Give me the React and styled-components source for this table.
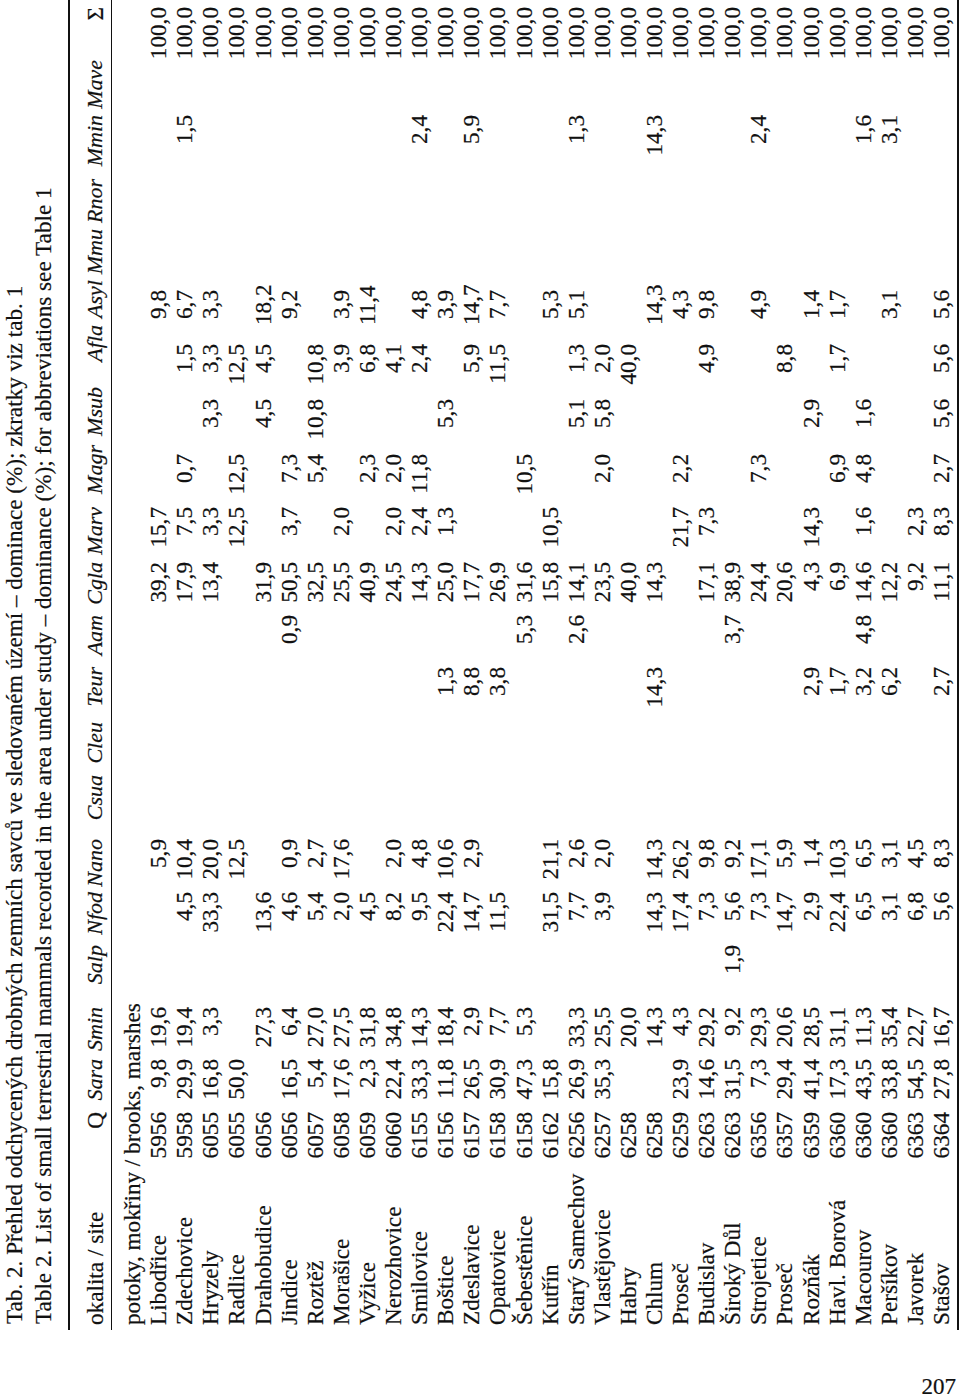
import React from 'react'
import styled, { createGlobalStyle } from 'styled-components'

const GlobalStyle = createGlobalStyle`
    html, body {
        margin: 0;
        padding: 0;
        background: #fff;
    }
    body {
        font-family: "Liberation Serif", "Times New Roman", serif;
        color: #111;
    }
`

// right = right edge of the header label, inset = how far the numbers sit left of it
const COLUMNS = [
    { label: 'Q', right: 218, inset: 0, italic: false },
    { label: 'Sara', right: 271, inset: 0, italic: true },
    { label: 'Smin', right: 323, inset: 0, italic: true },
    { label: 'Salp', right: 385, inset: 0, italic: true },
    { label: 'Nfod', right: 438, inset: 0, italic: true },
    { label: 'Nano', right: 491, inset: 0, italic: true },
    { label: 'Csua', right: 555, inset: 0, italic: true },
    { label: 'Cleu', right: 608, inset: 0, italic: true },
    { label: 'Teur', right: 663, inset: 0, italic: true },
    { label: 'Aam', right: 715, inset: 0, italic: true },
    { label: 'Cgla', right: 768, inset: 0, italic: true },
    { label: 'Marv', right: 823, inset: 0, italic: true },
    { label: 'Magr', right: 885, inset: 9, italic: true },
    { label: 'Msub', right: 943, inset: 12, italic: true },
    { label: 'Afla', right: 1005, inset: 19, italic: true },
    { label: 'Asyl', right: 1050, inset: 10, italic: true },
    { label: 'Mmu', right: 1101, inset: 0, italic: true },
    { label: 'Rnor', right: 1151, inset: 0, italic: true },
    { label: 'Mmin', right: 1215, inset: 0, italic: true },
    { label: 'Mave', right: 1270, inset: 0, italic: true },
    { label: 'Σ', right: 1323, inset: 0, italic: false },
]

const SITE_WIDTH = 160
const widths = COLUMNS.map((c, i) => c.right - (i === 0 ? SITE_WIDTH : COLUMNS[i - 1].right))
const GRID = `${SITE_WIDTH}px ${widths.map(w => `${w}px`).join(' ')} 1fr`

const rows = [
    ['Libodřice', '5956', { Sara: '9,8', Smin: '19,6', Nano: '5,9', Cgla: '39,2', Marv: '15,7', Asyl: '9,8' }],
    ['Zdechovice', '5958', { Sara: '29,9', Smin: '19,4', Nfod: '4,5', Nano: '10,4', Cgla: '17,9', Marv: '7,5', Magr: '0,7', Afla: '1,5', Asyl: '6,7', Mmin: '1,5' }],
    ['Hryzely', '6055', { Sara: '16,8', Smin: '3,3', Nfod: '33,3', Nano: '20,0', Cgla: '13,4', Marv: '3,3', Msub: '3,3', Afla: '3,3', Asyl: '3,3' }],
    ['Radlice', '6055', { Sara: '50,0', Nano: '12,5', Marv: '12,5', Magr: '12,5', Afla: '12,5' }],
    ['Drahobudice', '6056', { Smin: '27,3', Nfod: '13,6', Cgla: '31,9', Msub: '4,5', Afla: '4,5', Asyl: '18,2' }],
    ['Jindice', '6056', { Sara: '16,5', Smin: '6,4', Nfod: '4,6', Nano: '0,9', Aam: '0,9', Cgla: '50,5', Marv: '3,7', Magr: '7,3', Asyl: '9,2' }],
    ['Roztěž', '6057', { Sara: '5,4', Smin: '27,0', Nfod: '5,4', Nano: '2,7', Cgla: '32,5', Magr: '5,4', Msub: '10,8', Afla: '10,8' }],
    ['Morašice', '6058', { Sara: '17,6', Smin: '27,5', Nfod: '2,0', Nano: '17,6', Cgla: '25,5', Marv: '2,0', Afla: '3,9', Asyl: '3,9' }],
    ['Vyžice', '6059', { Sara: '2,3', Smin: '31,8', Nfod: '4,5', Cgla: '40,9', Magr: '2,3', Afla: '6,8', Asyl: '11,4' }],
    ['Nerozhovice', '6060', { Sara: '22,4', Smin: '34,8', Nfod: '8,2', Nano: '2,0', Cgla: '24,5', Marv: '2,0', Magr: '2,0', Afla: '4,1' }],
    ['Smilovice', '6155', { Sara: '33,3', Smin: '14,3', Nfod: '9,5', Nano: '4,8', Cgla: '14,3', Marv: '2,4', Magr: '11,8', Afla: '2,4', Asyl: '4,8', Mmin: '2,4' }],
    ['Boštice', '6156', { Sara: '11,8', Smin: '18,4', Nfod: '22,4', Nano: '10,6', Teur: '1,3', Cgla: '25,0', Marv: '1,3', Msub: '5,3', Asyl: '3,9' }],
    ['Zdeslavice', '6157', { Sara: '26,5', Smin: '2,9', Nfod: '14,7', Nano: '2,9', Teur: '8,8', Cgla: '17,7', Afla: '5,9', Asyl: '14,7', Mmin: '5,9' }],
    ['Opatovice', '6158', { Sara: '30,9', Smin: '7,7', Nfod: '11,5', Teur: '3,8', Cgla: '26,9', Afla: '11,5', Asyl: '7,7' }],
    ['Šebestěnice', '6158', { Sara: '47,3', Smin: '5,3', Aam: '5,3', Cgla: '31,6', Magr: '10,5' }],
    ['Kutřín', '6162', { Sara: '15,8', Nfod: '31,5', Nano: '21,1', Cgla: '15,8', Marv: '10,5', Asyl: '5,3' }],
    ['Starý Samechov', '6256', { Sara: '26,9', Smin: '33,3', Nfod: '7,7', Nano: '2,6', Aam: '2,6', Cgla: '14,1', Msub: '5,1', Afla: '1,3', Asyl: '5,1', Mmin: '1,3' }],
    ['Vlastějovice', '6257', { Sara: '35,3', Smin: '25,5', Nfod: '3,9', Nano: '2,0', Cgla: '23,5', Magr: '2,0', Msub: '5,8', Afla: '2,0' }],
    ['Habry', '6258', { Smin: '20,0', Cgla: '40,0', Afla: '40,0' }],
    ['Chlum', '6258', { Smin: '14,3', Nfod: '14,3', Nano: '14,3', Teur: '14,3', Cgla: '14,3', Asyl: '14,3', Mmin: '14,3' }],
    ['Proseč', '6259', { Sara: '23,9', Smin: '4,3', Nfod: '17,4', Nano: '26,2', Marv: '21,7', Magr: '2,2', Asyl: '4,3' }],
    ['Budislav', '6263', { Sara: '14,6', Smin: '29,2', Nfod: '7,3', Nano: '9,8', Cgla: '17,1', Marv: '7,3', Afla: '4,9', Asyl: '9,8' }],
    ['Široký Důl', '6263', { Sara: '31,5', Smin: '9,2', Salp: '1,9', Nfod: '5,6', Nano: '9,2', Aam: '3,7', Cgla: '38,9' }],
    ['Strojetice', '6356', { Sara: '7,3', Smin: '29,3', Nfod: '7,3', Nano: '17,1', Cgla: '24,4', Magr: '7,3', Asyl: '4,9', Mmin: '2,4' }],
    ['Proseč', '6357', { Sara: '29,4', Smin: '20,6', Nfod: '14,7', Nano: '5,9', Cgla: '20,6', Afla: '8,8' }],
    ['Rozňák', '6359', { Sara: '41,4', Smin: '28,5', Nfod: '2,9', Nano: '1,4', Teur: '2,9', Cgla: '4,3', Marv: '14,3', Msub: '2,9', Asyl: '1,4' }],
    ['Havl. Borová', '6360', { Sara: '17,3', Smin: '31,1', Nfod: '22,4', Nano: '10,3', Teur: '1,7', Cgla: '6,9', Magr: '6,9', Afla: '1,7', Asyl: '1,7' }],
    ['Macourov', '6360', { Sara: '43,5', Smin: '11,3', Nfod: '6,5', Nano: '6,5', Teur: '3,2', Aam: '4,8', Cgla: '14,6', Marv: '1,6', Magr: '4,8', Msub: '1,6', Mmin: '1,6' }],
    ['Peršíkov', '6360', { Sara: '33,8', Smin: '35,4', Nfod: '3,1', Nano: '3,1', Teur: '6,2', Cgla: '12,2', Asyl: '3,1', Mmin: '3,1' }],
    ['Javorek', '6363', { Sara: '54,5', Smin: '22,7', Nfod: '6,8', Nano: '4,5', Cgla: '9,2', Marv: '2,3' }],
    ['Stašov', '6364', { Sara: '27,8', Smin: '16,7', Nfod: '5,6', Nano: '8,3', Teur: '2,7', Cgla: '11,1', Marv: '8,3', Magr: '2,7', Msub: '5,6', Afla: '5,6', Asyl: '5,6' }],
]

const Page = styled.div`
    width: 960px;
    height: 1400px;
    overflow: hidden;
    background: #fff;
`

// the printed page is turned on its side, so the sheet is laid out flat and turned
const Stage = styled.div`
    width: 960px;
    height: 1345px;
    overflow: hidden;
`

const Sheet = styled.div`
    box-sizing: border-box;
    width: 1345px;
    height: 960px;
    padding: 0 3px 0 12px;
    transform-origin: 0 0;
    transform: translateY(1345px) rotate(-90deg);
    font-size: 23.2px;
    -webkit-text-stroke: 0.2px #111;
`

const Caption = styled.div`
    margin-top: -3px;
    padding-left: 6px;
    line-height: 28.5px;
    white-space: nowrap;
`

const Table = styled.div`
    margin-top: 11px;
    border-top: 2.5px solid #111;
    border-bottom: 2px solid #111;
`

const Head = styled.div`
    padding: 12px 0 3px;
    border-bottom: 1.2px solid #111;
`

const Body = styled.div`
    padding: 7px 0 3px;
`

const Row = styled.div`
    display: grid;
    grid-template-columns: ${GRID};
    height: 26.1px;
    line-height: 26.1px;
    white-space: nowrap;
`

const Site = styled.span`
    padding-left: 5px;
`

const Group = styled.span`
    grid-column: 1 / -1;
    padding-left: 5px;
`

const Label = styled.span`
    text-align: right;
    font-size: ${p => (p.$italic ? '22px' : '23.2px')};
    font-style: ${p => (p.$italic ? 'italic' : 'normal')};
`

const Value = styled.span`
    text-align: right;
    padding-right: ${p => p.$inset}px;
`

const Footer = styled.div`
    display: flex;
    justify-content: flex-end;
    height: 55px;
    box-sizing: border-box;
    padding: 29px 4px 0 0;
    font-size: 23px;
    line-height: 26px;
    -webkit-text-stroke: 0.2px #111;
`

function App() {
    return (
        <Page>
            <GlobalStyle />
            <Stage>
                <Sheet>
                    <Caption>
                        Tab. 2. Přehled odchycených drobných zemních savců ve sledovaném území – dominace (%); zkratky viz tab. 1
                        <br />
                        Table 2. List of small terrestrial mammals recorded in the area under study – dominance (%); for abbreviations see Table 1
                    </Caption>
                    <Table>
                        <Head>
                            <Row>
                                <Site>okalita / site</Site>
                                {COLUMNS.map(c => (
                                    <Label key={c.label} $italic={c.italic}>{c.label}</Label>
                                ))}
                            </Row>
                        </Head>
                        <Body>
                            <Row>
                                <Group>potoky, mokřiny / brooks, marshes</Group>
                            </Row>
                            {rows.map(([site, q, vals], i) => (
                                <Row key={i}>
                                    <Site>{site}</Site>
                                    <Value $inset={0}>{q}</Value>
                                    {COLUMNS.slice(1).map(c => (
                                        <Value key={c.label} $inset={c.inset}>
                                            {c.label === 'Σ' ? '100,0' : vals[c.label] || ''}
                                        </Value>
                                    ))}
                                </Row>
                            ))}
                        </Body>
                    </Table>
                </Sheet>
            </Stage>
            <Footer>207</Footer>
        </Page>
    )
}

export default App
